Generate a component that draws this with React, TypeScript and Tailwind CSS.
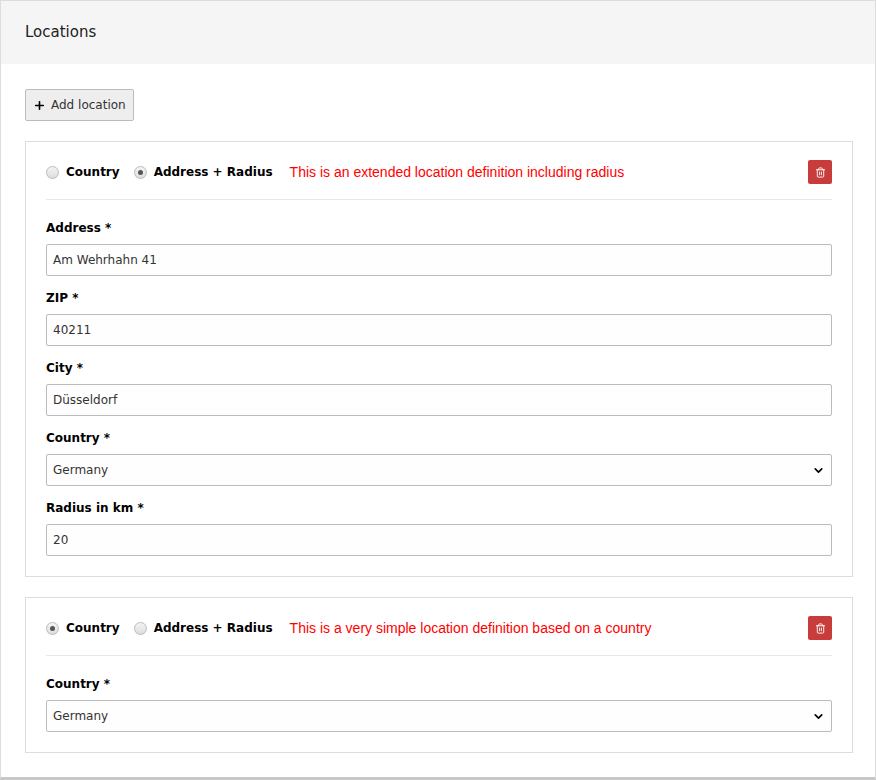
import { Plus, Trash2, ChevronDown } from "lucide-react";

const font = { fontFamily: '"DejaVu Sans", Verdana, sans-serif' };

function Radio({ checked, label }: { checked: boolean; label: string }) {
  return (
    <label className="flex items-center gap-[7px] font-bold text-[12px] text-black">
      <span className="w-[13px] h-[13px] rounded-full border border-[#bbb] bg-gradient-to-b from-[#f4f4f4] to-[#ddd] flex items-center justify-center">
        {checked && <span className="w-[5px] h-[5px] rounded-full bg-[#555]" />}
      </span>
      {label}
    </label>
  );
}

function Field({ label, value, select }: { label: string; value: string; select?: boolean }) {
  return (
    <div className="mt-[14px] first:mt-0">
      <div className="text-[12px] leading-[17px] font-bold text-black mb-[7px]">{label}</div>
      <div className="h-[32px] border border-[#bbb] rounded-[2px] bg-[#fefefe] px-[6px] flex items-center justify-between text-[12px] text-[#333]">
        <span>{value}</span>
        {select && <ChevronDown size={13} strokeWidth={3} className="text-black" />}
      </div>
    </div>
  );
}

function Card({ mode, note, children }: { mode: "country" | "address"; note: string; children: React.ReactNode }) {
  return (
    <div className="border border-[#ddd] px-[20px] pt-[18px] pb-[20px]">
      <div className="flex items-center pb-[15px] border-b border-[#e8e8e8]">
        <div className="flex items-center gap-[14px]">
          <Radio checked={mode === "country"} label="Country" />
          <Radio checked={mode === "address"} label="Address + Radius" />
        </div>
        <span className="ml-[17px] text-[14px] text-[#ff0000]" style={{ fontFamily: '"Liberation Sans", Arial, sans-serif' }}>
          {note}
        </span>
        <button className="ml-auto w-[24px] h-[24px] rounded-[2px] bg-[#c83c3c] flex items-center justify-center">
          <Trash2 size={11} className="text-white" />
        </button>
      </div>
      <div className="pt-[20px]">{children}</div>
    </div>
  );
}

export default function App() {
  return (
    <div className="w-[876px] h-[780px] bg-white" style={font}>
      <div className="border border-[#ddd] border-b-[3px] border-b-[#c8c8c8] h-[780px]">
        <div className="h-[63px] bg-[#f5f5f5] flex items-center px-[24px] text-[15px] text-[#222]">
          Locations
        </div>
        <div className="pl-[24px] pr-[22px] pt-[25px]">
          <button className="h-[32px] px-[7px] border border-[#bbb] rounded-[2px] bg-[#eee] flex items-center gap-[5px] text-[12px] text-[#333]">
            <Plus size={13} strokeWidth={3} className="text-black" />
            Add location
          </button>
          <div className="mt-[20px] flex flex-col gap-[20px]">
            <Card mode="address" note="This is an extended location definition including radius">
              <Field label="Address *" value="Am Wehrhahn 41" />
              <Field label="ZIP *" value="40211" />
              <Field label="City *" value="Düsseldorf" />
              <Field label="Country *" value="Germany" select />
              <Field label="Radius in km *" value="20" />
            </Card>
            <Card mode="country" note="This is a very simple location definition based on a country">
              <Field label="Country *" value="Germany" select />
            </Card>
          </div>
        </div>
      </div>
    </div>
  );
}
